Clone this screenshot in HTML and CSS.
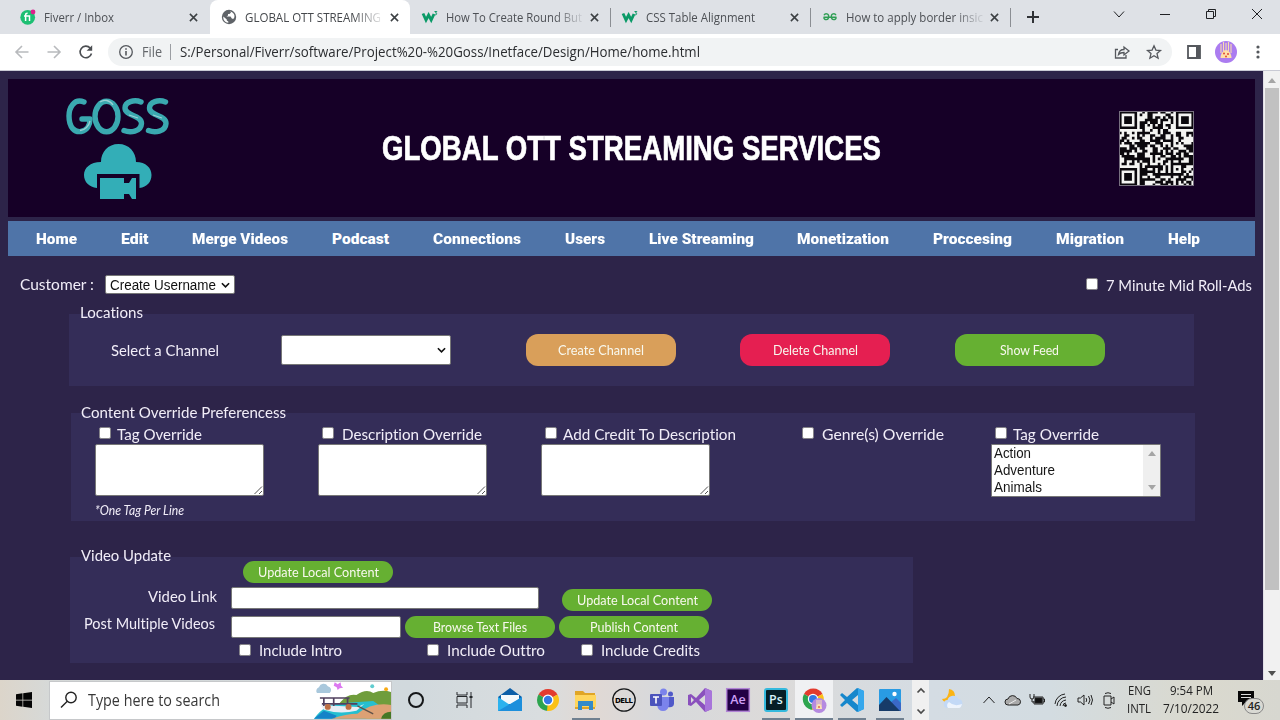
FILE: index.html
```html
<!DOCTYPE html>
<html lang="en">
<head>
<meta charset="utf-8">
<title>GLOBAL OTT STREAMING SERVICES</title>
<link rel="stylesheet" href="styles.css">
</head>
<body>
<div class="tabs">
  <div class="tab first">
    <svg class="fav" viewBox="0 0 16 16"><circle cx="7.7" cy="8.3" r="7.4" fill="#1dbf73"/><path d="M4 7h5.500v5M5.600 12V6q0-1.800 2-1.700" fill="none" stroke="#fff" stroke-width="1.5"/><circle cx="13" cy="3" r="2.400" fill="#e01e8c"/></svg>
    <span class="tt"><span class="fit" data-w="70">Fiverr / Inbox</span></span>
    <svg class="x" viewBox="0 0 10 10"><path d="M1 1l8 8M9 1l-8 8"/></svg>
  </div>
  <div class="tab active">
    <svg class="fav" viewBox="0 0 16 16"><circle cx="8" cy="8" r="7.200" fill="#5f6368"/><path d="M2.300 7.500l3.500 3v1l1.500 1v1.300C4 13.500 2 11 2.300 7.500zM9 2.200l1 1.300-1.500 1.500H7v1.500L5.500 7.500h4l1.500 2.300h1.500c2-2.300 1.200-6-3.500-7.600z" fill="#fff"/></svg>
    <span class="tt fade"><span class="fit" data-w="136">GLOBAL OTT STREAMING</span></span>
    <svg class="x" viewBox="0 0 10 10"><path d="M1 1l8 8M9 1l-8 8"/></svg>
  </div>
  <div class="tab">
    <svg class="fav" viewBox="0 0 16 16"><path d="M1 4.500l3 6.500 2.600-5 2.600 5L12 5" fill="none" stroke="#0a9a67" stroke-width="2.800"/><path d="M12.500 2.500h2.300L13.500 4c2 0 1.500 2.300-.8 1.800" fill="none" stroke="#0a9a67"/></svg>
    <span class="tt fade"><span class="fit" data-w="136">How To Create Round But</span></span>
    <svg class="x" viewBox="0 0 10 10"><path d="M1 1l8 8M9 1l-8 8"/></svg>
  </div>
  <div class="tab sep">
    <svg class="fav" viewBox="0 0 16 16"><path d="M1 4.500l3 6.500 2.600-5 2.600 5L12 5" fill="none" stroke="#0a9a67" stroke-width="2.800"/><path d="M12.500 2.500h2.300L13.500 4c2 0 1.500 2.300-.8 1.800" fill="none" stroke="#0a9a67"/></svg>
    <span class="tt"><span class="fit" data-w="109">CSS Table Alignment</span></span>
    <svg class="x" viewBox="0 0 10 10"><path d="M1 1l8 8M9 1l-8 8"/></svg>
  </div>
  <div class="tab sep">
    <svg class="fav" viewBox="0 0 16 16"><path d="M1.500 8.200h13M2 6.200c1-2 4.700-2 4.700 1.300 0 4-4.700 4-4.900.9M14 6.200c-1-2-4.700-2-4.700 1.300 0 4 4.700 4 4.900.9" fill="none" stroke="#2f9e54" stroke-width="1.400"/></svg>
    <span class="tt fade"><span class="fit" data-w="137">How to apply border insic</span></span>
    <svg class="x" viewBox="0 0 10 10"><path d="M1 1l8 8M9 1l-8 8"/></svg>
  </div>
  <div class="newtab"><svg width="12" height="12" viewBox="0 0 12 12"><path d="M6 0v12M0 6h12" stroke="#303236" stroke-width="2"/></svg></div>
  <div class="win">
    <svg viewBox="0 0 12 12"><path d="M1 3.500l5 5.500 5-5.500"/></svg>
    <svg viewBox="0 0 12 12"><path d="M1 6.500h10"/></svg>
    <svg viewBox="0 0 12 12"><path d="M1.500 3.500h7v7h-7zM3.500 3.500v-2h7v7h-2"/></svg>
    <svg viewBox="0 0 12 12"><path d="M1 1l10 10M11 1L1 11"/></svg>
  </div>
</div>
<div class="toolbar">
  <svg class="tb back" viewBox="0 0 16 16"><path d="M14.500 8H2M8 2L2 8l6 6" stroke="#b8babd"/></svg>
  <svg class="tb fwd" viewBox="0 0 16 16"><path d="M1.500 8H14M8 2l6 6-6 6" stroke="#b8babd"/></svg>
  <svg class="tb reload" viewBox="0 0 16 16"><path d="M13.500 9.500A5.800 5.800 0 1 1 12.200 4" stroke="#4b4e52" stroke-width="1.800"/><path d="M14.200 1.200v5.600H8.600z" fill="#4b4e52"/></svg>
  <div class="omni">
    <svg class="info" viewBox="0 0 16 16"><circle cx="8" cy="8" r="6.300"/><path d="M8 7v4.500M8 4.300v1.500" stroke-width="1.600"/></svg>
    <span class="file"><span class="fit" data-w="20">File</span></span>
    <i class="bar"></i>
    <span class="url"><span class="fit" data-w="520">S:/Personal/Fiverr/software/Project%20-%20Goss/Inetface/Design/Home/home.html</span></span>
    <svg class="share" viewBox="0 0 16 16"><path d="M4 5.500H1.500v8.500h10.500v-3M4.500 10.500c.5-3.500 2.500-5 5.500-5V3l5 4-5 4V8.500c-2.500 0-4 .3-5.500 2z"/></svg>
    <svg class="star" viewBox="0 0 16 16"><path d="M8 1.800l1.900 4.300 4.600.4-3.500 3.100 1.100 4.600L8 11.700l-4.100 2.500L5 9.600 1.500 6.500l4.600-.4z"/></svg>
  </div>
  <svg class="side" viewBox="0 0 14 14"><path d="M1 1h12v12H1z" fill="#fff" stroke="#55585d" stroke-width="1.800"/><path d="M9 1h4v12H9z" fill="#55585d"/></svg>
  <svg class="avatar" viewBox="0 0 22 22"><circle cx="11" cy="11" r="11" fill="#ab7cf0"/><path d="M6 3v9M8.500 1v9M11 2v7M13.500 1v9M16 3v9" stroke="#fadcae" stroke-width="1.100"/><path d="M5.500 17c0-4 2.500-8 5.500-8s5.500 4 5.500 8z" fill="#ffe0a8"/><g fill="#e04a36"><circle cx="9" cy="12.500" r="1"/><circle cx="13" cy="13" r="1"/><circle cx="11" cy="15.500" r="1"/></g></svg>
  <svg class="dots" viewBox="0 0 4 14"><g fill="#55585d"><circle cx="2" cy="2" r="1.600"/><circle cx="2" cy="7" r="1.600"/><circle cx="2" cy="12" r="1.600"/></g></svg>
</div>

<div class="view">
  <div class="page">
    <header class="banner">
      <div class="logo">
        <svg class="goss" viewBox="0 0 104 36"><g fill="none" stroke="#3aa9b0" stroke-width="5.400" stroke-linecap="round" stroke-linejoin="round"><path d="M18 4C8 0 3 10 3 18c0 12 6 16.500 12 15.500 6-1 9-6 9-12.500H16"/><ellipse cx="40.500" cy="18.500" rx="11.500" ry="15.200"/><path d="M75 4c-7-3-16 0-16 6 0 8 17 7 16.500 15.500C75 34 64 35 58 32.500M99.500 4c-7-3-16 0-16 6 0 8 17 7 16.500 15.500C99.500 34 88.500 35 82.500 32.500"/></g><path d="M24 23c-1 5-5 9-10 9.500M34 4c4-3 10-2 13 3M63 17l9 3M87 17l9 3" fill="none" stroke="#b9dee0" stroke-width="1.300" opacity=".75"/></svg>
        <svg class="cloud" viewBox="0 0 68 56"><path d="M13 44C5 43 0 38 0 31 0 24 6 18 17 18 17 8 24 0 34.500 0S52 8 52 18c10 0 15.500 6 15.500 13 0 7-4.500 12-12 13V30H13z" fill="#33aeb7"/><path d="M16 34h24v5h5l3-5h4v21h-4l-3-5h-5v5H16z" fill="#33aeb7"/></svg>
      </div>
      <h1><span class="fit" data-w="499">GLOBAL OTT STREAMING SERVICES</span></h1>
      <svg class="qr" viewBox="0 0 29 29"><rect width="29" height="29" fill="#f4f4f2"/><path id="qr" fill="#0b080d"/></svg>
    </header>
    <nav class="menu">
      <a><span class="fit" data-w="41">Home</span></a><a><span class="fit" data-w="27.500">Edit</span></a><a><span class="fit" data-w="96">Merge Videos</span></a><a><span class="fit" data-w="57">Podcast</span></a><a><span class="fit" data-w="88">Connections</span></a><a><span class="fit" data-w="40">Users</span></a><a><span class="fit" data-w="105">Live Streaming</span></a><a><span class="fit" data-w="92">Monetization</span></a><a><span class="fit" data-w="79">Proccesing</span></a><a><span class="fit" data-w="68">Migration</span></a><a><span class="fit" data-w="32">Help</span></a>
    </nav>
    <div class="customer">
      <span class="fit" data-w="74">Customer :</span>
      <div class="select small"><span class="fit" data-w="106">Create Username</span><svg class="chev" viewBox="0 0 10 6"><path d="M1 1l4 4 4-4"/></svg></div>
      <div class="midroll"><i class="cb"></i><span class="fit" data-w="146">7 Minute Mid Roll-Ads</span></div>
    </div>

    <section class="panel locations">
      <div class="legend"><span class="fit" data-w="63">Locations</span></div>
      <div class="row">
        <span class="fit" data-w="108">Select a Channel</span>
        <div class="select big"><svg class="chev" viewBox="0 0 10 6"><path d="M1 1l4 4 4-4"/></svg></div>
        <div class="btns">
          <div class="btn tan"><span class="fit" data-w="86">Create Channel</span></div>
          <div class="btn red"><span class="fit" data-w="85">Delete Channel</span></div>
          <div class="btn"><span class="fit" data-w="59">Show Feed</span></div>
        </div>
      </div>
    </section>

    <section class="panel content">
      <div class="legend"><span class="fit" data-w="205">Content Override Preferencess</span></div>
      <div class="cols">
        <div class="col"><div class="chk"><i class="cb"></i><span class="fit" data-w="85">Tag Override</span></div>
          <div class="area"><svg class="grip" viewBox="0 0 10 10"><path d="M1.500 9L9 1.500M6 9l3-3"/></svg></div>
          <div class="note"><span class="fit" data-w="89">*One Tag Per Line</span></div></div>
        <div class="col wide"><div class="chk"><i class="cb"></i><span class="fit" data-w="140">Description Override</span></div>
          <div class="area"><svg class="grip" viewBox="0 0 10 10"><path d="M1.500 9L9 1.500M6 9l3-3"/></svg></div></div>
        <div class="col"><div class="chk"><i class="cb"></i><span class="fit" data-w="173">Add Credit To Description</span></div>
          <div class="area"><svg class="grip" viewBox="0 0 10 10"><path d="M1.500 9L9 1.500M6 9l3-3"/></svg></div></div>
        <div class="col wide"><div class="chk"><i class="cb"></i><span class="fit" data-w="122">Genre(s) Override</span></div></div>
        <div class="col"><div class="chk"><i class="cb"></i><span class="fit" data-w="86">Tag Override</span></div>
          <div class="list"><div class="opts"><span class="fit" data-w="37">Action</span><span class="fit" data-w="61">Adventure</span><span class="fit" data-w="48">Animals</span></div><div class="lbar"><i class="up"></i><i class="down"></i></div></div></div>
      </div>
    </section>

    <section class="panel video">
      <div class="legend"><span class="fit" data-w="90">Video Update</span></div>
      <div class="btn pill top"><span class="fit" data-w="121">Update Local Content</span></div>
      <div class="vrow link"><div class="lab"><span class="fit" data-w="69">Video Link</span></div><div class="input long"></div><div class="btn pill"><span class="fit" data-w="121">Update Local Content</span></div></div>
      <div class="vrow post"><div class="lab"><span class="fit" data-w="131">Post Multiple Videos</span></div><div class="input"></div><div class="btn pill"><span class="fit" data-w="94">Browse Text Files</span></div><div class="btn pill"><span class="fit" data-w="88">Publish Content</span></div></div>
      <div class="incs"><div class="chk"><i class="cb"></i><span class="fit" data-w="83">Include Intro</span></div><div class="chk"><i class="cb"></i><span class="fit" data-w="98">Include Outtro</span></div><div class="chk"><i class="cb"></i><span class="fit" data-w="99">Include Credits</span></div></div>
    </section>
  </div>
  <div class="scroll"><i class="up"></i><div class="thumb"></div><i class="down"></i></div>
</div>

<div class="taskbar">
  <div class="start"><svg width="16" height="16" viewBox="0 0 16 16"><path d="M0 2.300l6.500-1v6.400H0zM7.200 1.200L16 0v7.700H7.200zM0 8.400h6.500v6.300L0 13.800zM7.200 8.400H16V16l-8.800-1.200z" fill="#050505"/></svg></div>
  <div class="search">
    <svg class="mag" viewBox="0 0 18 18"><circle cx="11" cy="6.500" r="5.200"/><path d="M7.300 10.200L1 16.500"/></svg>
    <span class="fit" data-w="132">Type here to search</span>
    <svg class="art" viewBox="0 0 80 38"><path d="M28 22q8-10 17-8 10-7 17-2 9-4 18-1v27H28z" fill="#6f9d3c"/><path d="M2 38q12-17 30-16l30-2 10 7-18 11z" fill="#25bfd0"/><path d="M2 38L12 30l13 5-2 3z" fill="#1683c8"/><path d="M20 38q15-5 26-5 15-12 34-9v14z" fill="#dda174"/><path d="M9 24l37 2 7-3-8 7q-17 4-33-1z" fill="#e9eef5"/><path d="M8 17h30M12 17v8M22 17v8M36 17v8M10 23h36" stroke="#51415f" stroke-width="1.700" fill="none"/><circle cx="16" cy="26" r="3" fill="#bd6e42"/><circle cx="37" cy="26" r="3" fill="#bd6e42"/><path d="M46 25l16 8" stroke="#5f5148" stroke-width="1.300"/><path d="M5 12a4 4 0 0 1 2-6 5 5 0 0 1 9-1 4 4 0 0 1 2 7z" fill="#a9c8dc"/><path d="M23 1l3 2 3-2 .500 3.500 2 2-3.500.500-2 2-1-3-3-1.500z" fill="#dc7af0"/><circle cx="61" cy="5" r="2" fill="#61cdd0"/><circle cx="75" cy="8" r="2" fill="#f8aa14"/><path d="M70 38q2-7 10-7v7z" fill="#447826"/></svg>
  </div>
  <div class="cortana"></div>
  <svg class="tview" viewBox="0 0 18 18"><path d="M2 1v3h10V1M2 5.500h10V12H2zM2 17v-3h10v3M16 1v16" fill="none" stroke="#26292c"/><path d="M14.500 5h3v2h-3z" fill="#26292c"/></svg>
  <div class="apps">
    <div><svg viewBox="0 0 24 24"><path d="M0 9L12 0l12 9v14H0z" fill="#0c5ea8"/><path d="M3 7h18v9H3z" fill="#f4f8fb"/><path d="M0 9l12 8 12-8v14H0z" fill="#2cb2ee"/><path d="M0 23L24 9v14z" fill="#1c8fdc"/></svg></div>
    <div><svg viewBox="0 0 24 24"><path d="M12 12L2.500 6.500A11 11 0 0 1 21.500 6.500z" fill="#e33b2e"/><path d="M12 12V23A11 11 0 0 1 2.500 6.500z" fill="#2da44e"/><path d="M12 12l9.500-5.500A11 11 0 0 1 11 23z" fill="#fbc116"/><circle cx="12" cy="12" r="5.500" fill="#fff"/><circle cx="12" cy="12" r="4.200" fill="#3478e5"/></svg></div>
    <div class="run"><svg viewBox="0 0 24 24"><path d="M1 3h8l2 2h10v16H1z" fill="#e0a526"/><path d="M1 7h21v12H1z" fill="#ffd65d"/><path d="M4 22v-9h15v9h-4v-4H8v4z" fill="#348bc8"/></svg></div>
    <div><svg viewBox="0 0 24 24"><circle cx="12" cy="12" r="11.200" fill="none" stroke="#17191b" stroke-width="1.300"/><text x="12" y="14.500" text-anchor="middle" textLength="18" class="dell">DELL</text></svg></div>
    <div><svg viewBox="0 0 24 24"><circle cx="20.500" cy="6" r="2.500" fill="#5059c9"/><circle cx="13.500" cy="4" r="3.500" fill="#7b83eb"/><path d="M18 9h6v7q-1 4-6 3z" fill="#5059c9"/><path d="M8 9h11v8q-1 6-6 6t-6-6z" fill="#7b83eb"/><rect y="6" width="12" height="12" rx="1" fill="#4b53bc"/><path d="M3 9h6M6 9v6.500" stroke="#fff" stroke-width="1.600"/></svg></div>
    <div><svg viewBox="0 0 24 24"><path d="M17 0l7 3v18l-7 3L8 14l-5 4-3-1V7l3-1 5 4zM3 9v6l3-3zM17 7l-6 5 6 5z" fill="#8a50bd" fill-rule="evenodd"/><path d="M17 0l7 3v18l-7 3z" fill="#a875da"/></svg></div>
    <div><svg viewBox="0 0 24 24"><rect x=".7" y=".7" width="22.600" height="22.600" fill="#220044" stroke="#b184d5" stroke-width="1.500"/><text x="12" y="16" text-anchor="middle" class="ae">Ae</text></svg></div>
    <div class="run"><svg viewBox="0 0 24 24"><rect x="1" y="1" width="22" height="22" rx="2" fill="#061e26" stroke="#35b9dd" stroke-width="2"/><text x="12" y="16" text-anchor="middle" class="ps">Ps</text></svg></div>
    <div class="run on"><svg viewBox="0 0 24 24"><path d="M11 11L2 6A10.500 10.500 0 0 1 20.500 6z" fill="#e33b2e"/><path d="M11 11V22A11 11 0 0 1 2 6z" fill="#2da44e"/><path d="M11 11l9.500-5A11 11 0 0 1 10 22z" fill="#fbc116"/><circle cx="11" cy="11" r="5.200" fill="#fff"/><circle cx="11" cy="11" r="4" fill="#3478e5"/><circle cx="17" cy="17.500" r="7.500" fill="#b58ae0"/><path d="M15 12v6M17 12v6M19 12v6" fill="none" stroke="#fbe0b4"/><path d="M14 21q0-5 3-5t3 5z" fill="#fbe0b4"/><circle cx="17" cy="19" r="1" fill="#e06b4a"/></svg></div>
    <div class="run"><svg viewBox="0 0 24 24"><path d="M17 0l7 3v18l-7 3L7 15l-5 4-2-2 5-5-5-5 2-2 5 4zm1 7l-6 5 6 5z" fill="#1687cc" fill-rule="evenodd"/><path d="M18 0l6 3v18l-6 3z" fill="#35a7ec"/></svg></div>
    <div class="run"><svg viewBox="0 0 24 24"><rect x="1" y="1" width="22" height="22" rx="1" fill="#299be3"/><path d="M12 15l6-5 5 5v8H12z" fill="#3a69c7"/><path d="M1 17L8.500 9 22 23H1z" fill="#173b68"/><circle cx="16.500" cy="6" r="2.200" fill="#fff"/></svg></div>
  </div>
  <div class="updown"><svg viewBox="0 0 8 5"><path d="M.5 4.500L4 1l3.500 3.500"/></svg><svg viewBox="0 0 8 5"><path d="M.5.500L4 4 7.500.5"/></svg></div>
  <svg class="weather" viewBox="0 0 22 20"><path d="M7 0q6 1 6 7 0 6-6 7-5 0-7-4 7 0 7-10z" fill="#fbb415"/><path d="M6 19a4 4 0 0 1-.500-8 6 6 0 0 1 11-1A4.600 4.600 0 0 1 17 19z" fill="#c3d9f6"/><path d="M6 19a4 4 0 0 1 1-6q5 5 13 2-1 4-3 4z" fill="#eef4fc"/></svg>
  <div class="tray">
    <svg viewBox="0 0 16 16"><path d="M2.500 11L8 5l5.500 6"/></svg>
    <svg viewBox="0 0 16 16"><path d="M3 13a3 3 0 0 1 0-6 4.800 4.800 0 0 1 9-.5A3.300 3.300 0 0 1 13 13z" fill="#aaa"/><path d="M4 12l7-4" stroke="#eee"/></svg>
    <svg viewBox="0 0 16 16"><path d="M4 5h10v7H5V9M14 7h1.500v3H14M1 2v3q0 2 2 2t2-2V2M3 7v3h2"/><path d="M6 6h7v5H6z" fill="#111"/></svg>
    <svg viewBox="0 0 16 16"><path d="M2 12A11 11 0 0 1 12 2M4 14A9.500 9.500 0 0 1 13 5M7 14a7 7 0 0 1 6-6M10 14q0-3 3-3"/><circle cx="12.500" cy="13.500" r="1" fill="#222"/></svg>
    <svg viewBox="0 0 16 16"><path d="M1 6h2.500L7 3v10L3.500 10H1zM9 6q1.500 2 0 4M11.500 4q3 4 0 8M14 3q3 5 0 10"/></svg>
    <svg viewBox="0 0 16 16"><path d="M3 4h7v9H3zM10 7l3-2v7l-3-2M4 1.500q3-1.500 6 0M4 15.500q3 1.500 6 0"/></svg>
  </div>
  <div class="lang"><span class="fit" data-w="23">ENG</span><span class="fit" data-w="24">INTL</span></div>
  <div class="clock"><span class="fit" data-w="43">9:54 PM</span><span class="fit" data-w="56">7/10/2022</span></div>
  <div class="notif"><svg width="17" height="17" viewBox="0 0 17 17"><path d="M0 1h16v11H8l-4 4v-4H0z" fill="#080808"/><path d="M3 4.500h10M3 7.500h10" stroke="#ddd"/></svg><b>46</b></div>
</div>
<script src="app.js"></script>
</body>
</html>
```

FILE: styles.css
```css
* { box-sizing: border-box; }
body { margin: 0; width: 1280px; height: 720px; overflow: hidden; font-family: "Open Sans", "Noto Sans", sans-serif; background: #2d2449; }
svg { flex: none; display: block; overflow: visible; }
.fit { display: inline-block; white-space: nowrap; flex: none; font-variant-ligatures: none; }
.fit > span { display: inline-block; transform-origin: 0 50%; }

.tabs { display: flex; height: 34px; background: #dee1e6; padding-left: 10px; }
.tab { width: 200px; height: 34px; display: flex; align-items: center; padding-left: 12px; flex: none; }
.tab.first { padding-left: 10px; }
.tab.active { background: #fff; border-radius: 8px 8px 0 0; padding-left: 11px; }
.tab.sep { background: linear-gradient(#8b8e93, #8b8e93) 0 8px / 1px 19px no-repeat; }
.fav { width: 16px; height: 16px; margin-right: 8px; }
.tt { width: 144px; font-size: 13px; color: #4d5055; line-height: 18px; height: 18px; }
.active .tt { width: 145px; color: #45484c; }
.first .tt { width: 145px; }
.fade { mask-image: linear-gradient(90deg, #000 108px, transparent 140px); }
.x { width: 9px; height: 9px; }
.x path { stroke: #3c4043; stroke-width: 1.7; fill: none; }
.newtab { width: 50px; padding: 11px 0 0 17px; background: linear-gradient(#8b8e93, #8b8e93) 0 8px / 1px 19px no-repeat; }
.win { display: flex; gap: 34px; padding-top: 8px; margin-left: 53px; }
.win svg { width: 12px; height: 12px; }
.win path { fill: none; stroke: #202124; stroke-width: 1; }

.toolbar { height: 37px; background: #fff; border-bottom: 1px solid #c9cad4; display: flex; align-items: center; }
.tb { width: 16px; height: 16px; }
.tb path { fill: none; stroke-width: 1.6; }
.back { margin-left: 14px; }
.fwd { margin-left: 16px; }
.reload { margin-left: 16px; }
.reload path + path { fill: #4b4e52; }
.omni { margin-left: 14px; width: 1064px; height: 28px; border-radius: 14px; background: #f1f3f4; display: flex; align-items: center; font-size: 14.500px; line-height: 20px; color: #2b2d30; }
.omni svg { width: 16px; height: 16px; fill: none; stroke: #55585d; stroke-width: 1.3; }
.info { margin: 0 8px 0 10px; }
.file, .url { margin-top: -1px; }
.file { color: #63666a; }
.bar { width: 1px; height: 16px; background: #9b9ea3; margin: 0 9px 0 8px; }
.share { margin-left: auto; }
.star { margin: 0 10px 0 16px; }
.side { width: 14px; height: 14px; margin-left: 15px; }
.avatar { width: 22px; height: 22px; margin-left: 14px; }
.dots { width: 4px; height: 14px; margin-left: 19px; }

.view { display: flex; height: 609px; }
.page { width: 1263px; padding: 8px 8px 0; background: #2d2449; color: #f1edf8; font: 16px/20px Lato, sans-serif; overflow: hidden; flex: none; }
.banner { height: 138px; background: #160027; display: flex; margin-bottom: 4px; }
.logo { width: 104px; margin: 19px 0 0 58px; }
.goss { width: 104px; height: 36px; }
.cloud { width: 68px; height: 56px; margin: 10px 0 0 18px; }
h1 { margin: 46px 0 0 212px; font: bold 34.500px/46px "Liberation Sans Narrow", "Liberation Sans", sans-serif; color: #fff; width: 499px; -webkit-text-stroke: .7px #fff; }
.qr { width: 75px; height: 75px; margin: 32px 0 0 238px; outline: 1px solid #77707f; outline-offset: -1px; }
.menu { height: 35px; background: #4f74a8; display: flex; gap: 43.850px; padding-left: 28px; align-items: center; color: #fff; font: 900 15.5px/20px Roboto, sans-serif; }
.customer { height: 58px; display: flex; align-items: center; padding: 0 3px 1px 12px; }
.customer > .fit { margin-top: -2px; }
.select { background: #fff; border: 1px solid #777; border-radius: 2px; color: #111; font: 14px/16px "Liberation Sans", sans-serif; display: flex; align-items: center; justify-content: space-between; padding: 0 4px; }
.small { margin-left: 11px; width: 130px; height: 19px; }
.chev { width: 9px; height: 6px; fill: none; stroke: #111; stroke-width: 1.8; }
.midroll { margin-left: auto; display: flex; align-items: center; gap: 8px; padding-top: 1px; }
.cb { display: block; width: 12px; height: 12px; background: #fff; border: 1px solid #858389; border-radius: 2px; flex: none; }
.midroll .cb, .chk .cb { margin-top: -2px; }

.panel { background: #342d58; height: 72px; }
.legend { height: 20px; margin: -12px 0 1px 11px; }
.panel::before { content: ""; display: table; }
.locations { margin-left: 61px; width: 1125px; }
.row { display: flex; align-items: center; height: 54px; padding-left: 42px; }
.row > .fit { margin-top: -1px; }
.big { width: 170px; height: 30px; margin: 0 1px 0 62px; justify-content: flex-end; }
.btns { display: flex; gap: 64.300px; margin-left: 74px; }
.btn { width: 150px; height: 32px; border-radius: 12px; background: #66b032; color: #f8f8ee; font-size: 13px; display: flex; align-items: center; justify-content: center; flex: none; }
.tan { background: #d99f5a; }
.red { background: #e51f51; }

.content { margin: 27px 0 0 63px; width: 1124px; height: 108px; }
.content .legend { margin: -11px 0 0 10px; }
.cols { display: grid; grid-template-columns: 223px 223px 257px 193px 170px; padding: 2px 0 0 24px; }
.chk { display: flex; align-items: center; height: 20px; gap: 6px; }
.cols .chk { padding-left: 4px; }
.wide .chk { gap: 8px; }
.area { width: 169px; height: 52px; background: #fff; border: 1px solid #777; border-radius: 2px; display: flex; justify-content: flex-end; align-items: flex-end; }
.grip { width: 10px; height: 10px; fill: none; stroke: #555; stroke-width: 1; }
.note { font-style: italic; font-size: 12.5px; margin-top: 5px; }
.list { width: 170px; height: 53px; border: 1px solid #777; background: #fff; color: #161616; border-radius: 1px; display: flex; justify-content: space-between; }
.opts { display: flex; flex-direction: column; padding-left: 2px; font: 14px/17px "Liberation Sans", sans-serif; }
.lbar { width: 17px; background: #efefef; display: flex; flex-direction: column; justify-content: space-between; align-items: center; padding: 6px 0; }
.up, .down { border: 4px solid transparent; width: 0; height: 0; }
.up { border-top: 0; border-bottom: 5px solid #a5a5a5; }
.down { border-bottom: 0; border-top: 5px solid #a5a5a5; }

.video { margin: 36px 0 0 62px; width: 843px; height: 106px; }
.pill { height: 22px; border-radius: 11px; }
.video .legend { margin: -12px 0 0 10.500px; }
.top { margin: -4px 0 0 173px; }
.vrow { display: flex; align-items: flex-start; }
.input { width: 170px; height: 22px; background: #fff; border: 1px solid #777; border-radius: 2px; }
.long { width: 308px; }
.link { margin-top: 4px; height: 29px; padding-left: 78px; }
.link .lab { margin-top: -1px; }
.link .input { margin: 0 23px 0 14px; }
.link .btn { margin-top: 2px; }
.post { height: 24px; padding-left: 14px; gap: 4px; }
.post .lab { margin-top: -3px; }
.post .input { margin-left: 12px; }
.incs { display: grid; grid-template-columns: 187.500px 154px 150px; padding-left: 169px; }
.incs .chk { gap: 8px; }
.incs .cb { margin-top: -1px; }

.scroll { width: 17px; background: #f1f1f1; display: flex; flex-direction: column; align-items: center; border-left: 1px solid #e1dfe6; padding: 7px 0 4px; }
.thumb { width: 14px; height: 502px; background: #c1c1c1; margin-top: 5px; }
.scroll .down { margin-top: auto; border-top-color: #505050; }

.taskbar { height: 40px; display: flex; align-items: center; color: #222; background: linear-gradient(90deg, #dcd5ca 0, #d6d9d8 50px, #d1d9dd 410px, #d9dddf 540px, #e1d9d4 590px, #d7d9dc 660px, #dcdad9 770px, #d4dce3 930px, #d3dce1 1050px, #dad9ce 1200px, #d7d7d0 1280px); }
.start { width: 49px; padding-left: 16px; }
.search { width: 343px; height: 39px; background: #fff; border: 1px solid #c6c8ca; display: flex; align-items: center; font-size: 15.500px; color: #383838; }
.mag { width: 18px; height: 18px; margin: 0 10px; fill: none; stroke: #222; stroke-width: 1.4; }
.art { width: 79px; height: 38px; margin-left: auto; }
.cortana { width: 16px; height: 16px; border: 2.500px solid #151719; border-radius: 50%; margin-left: 16px; flex: none; }
.tview { width: 18px; height: 18px; margin-left: 31px; }
.apps { display: flex; margin-left: 18px; }
.apps div { width: 38px; height: 40px; padding: 8px 7px 0; flex: none; }
.apps svg { width: 24px; height: 24px; }
.apps .run { background: linear-gradient(#708090, #708090) 5px 38px / 28px 2px no-repeat; }
.apps .on { background: linear-gradient(#708090, #708090) 0 38px / 38px 2px no-repeat, #f0f1f3; }
.dell { font: bold 7px "DejaVu Sans", sans-serif; }
.ae, .ps { font: 600 12.5px "Open Sans", sans-serif; fill: #cfa0f7; }
.ps { fill: #d7f3fb; }
.updown { width: 17px; height: 40px; margin-left: 3px; background: #f0f0f0; display: flex; flex-direction: column; align-items: center; justify-content: space-between; padding: 8px 0 6px; flex: none; }
.updown svg { width: 8px; height: 5px; fill: none; stroke: #4a4a4a; stroke-width: 1.700; }
.weather { width: 22px; height: 20px; margin: 0 0 2px 13px; }
.tray { display: flex; gap: 8px; margin-left: 17px; }
.tray svg { width: 16px; height: 16px; fill: none; stroke: #222; stroke-width: 1; }
.lang, .clock { display: flex; flex-direction: column; font-size: 12px; line-height: 18px; align-items: center; }
.lang { margin-left: 10px; }
.clock { margin-left: 12px; }
.notif { position: relative; margin: -4px 0 0 19px; }
.notif b { position: absolute; left: 6px; top: 8px; width: 20px; height: 16px; border: 1px solid #888; border-radius: 8px; background: #d9d9d3; font: 600 11px/14px "Open Sans", sans-serif; text-align: center; }
```

FILE: app.js
```js
// Scale each label horizontally to its designed width.
document.querySelectorAll('.fit').forEach(el => {
  const inner = document.createElement('span');
  inner.textContent = el.textContent;
  el.textContent = '';
  el.appendChild(inner);
  const target = Number(el.dataset.w);
  const natural = inner.getBoundingClientRect().width;
  inner.style.transform = 'scaleX(' + target / natural + ')';
  el.style.width = target + 'px';
});

// Banner code: three finder marks, one alignment mark, filled modules elsewhere.
let seed = 41;
const next = () => (seed = (seed * 16807) % 2147483647) / 2147483647;
const ring = (dx, dy) => Math.max(Math.abs(dx), Math.abs(dy));
let path = '';
for (let y = 0; y < 29; y++) {
  for (let x = 0; x < 29; x++) {
    let dark = next() < 0.54;
    for (const [cx, cy] of [[3, 3], [25, 3], [3, 25]]) {
      const r = ring(x - cx, y - cy);
      if (r <= 4) dark = r !== 2 && r !== 4;
    }
    const a = ring(x - 22, y - 22);
    if (a <= 2) dark = a !== 1;
    if (dark) path += `M${x} ${y}h1v1h-1z`;
  }
}
document.getElementById('qr').setAttribute('d', path);
```
